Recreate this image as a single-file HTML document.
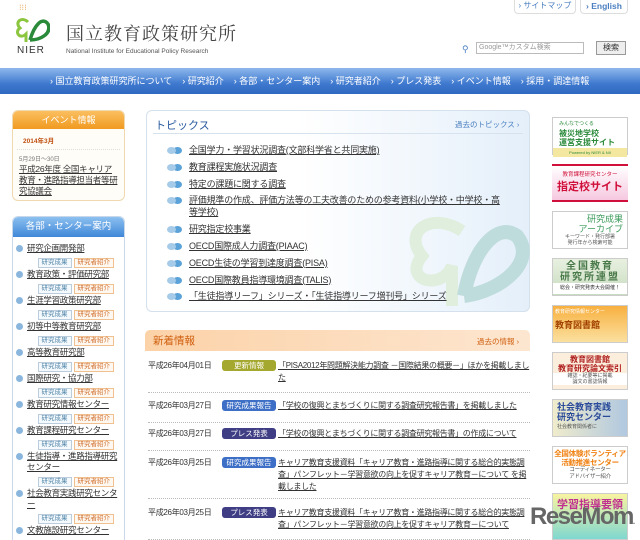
<!DOCTYPE html>
<html><head><meta charset="utf-8"><style>
*{margin:0;padding:0;box-sizing:border-box}
html,body{width:640px;height:540px;overflow:hidden}
body{background:#fff;font-family:"Liberation Sans","Noto Sans CJK JP",sans-serif;position:relative;color:#333}
.a{position:absolute}
u{text-decoration:underline}
.nav{left:0;top:68px;width:640px;height:26px;background:linear-gradient(#8fb8ec,#3f79cf 60%,#2f68c0);color:#fff;font-size:9px;line-height:26px;padding-left:50px;white-space:nowrap;overflow:hidden}
.nav span{margin-right:10px}
.box{border:1px solid #dfe6ef;border-radius:6px;background:#fff}
.tb{font-size:6.5px;padding:0 3px;border:1px solid #bcd;color:#58a;margin-right:2px;background:#f4f9fd;line-height:8px;display:inline-block}
.tb2{border-color:#f0c090;color:#d07030;background:#fff8f0}
.dep{font-size:8.5px;line-height:11px;padding-left:14px;position:relative;color:#333;letter-spacing:-0.3px}
.dep:before{content:"";position:absolute;left:3px;top:2px;width:7px;height:7px;border-radius:50%;background:#8ab6dd}
.tags{text-align:right;margin:1px 8px 4px 0;line-height:10px;height:10px}
.tp{font-size:9px;line-height:12px;padding-left:24px;position:relative;margin-bottom:4.8px;color:#333;letter-spacing:-0.2px}
.tp:before{content:"";position:absolute;left:2px;top:3px;width:9px;height:7px;border-radius:50%;background:#a6cbe8;box-shadow:6px 0 0 #5aa2d8}
.row{font-size:8px;left:148px;width:382px;border-bottom:1px dotted #bbb;position:absolute;letter-spacing:-0.3px}
.row .d{position:absolute;left:0;top:0}
.row .l{position:absolute;left:74px;top:0;width:54px;height:11px;border-radius:3px;color:#fff;font-size:7.5px;text-align:center;line-height:11px;letter-spacing:0}
.row .t{margin-left:130px;line-height:12px}
.bn{position:absolute;left:552px;width:76px;border:1px solid #ccc}
</style></head><body>
<div class="a" style="left:19px;top:3px;color:#e8a040;font-size:8px">⁝⁝⁝</div>
<svg class="a" style="left:14px;top:16px" width="36" height="28" viewBox="0 0 36 28"><path d="M14 6 C8 0 0 6 6 12 C0 16 6 24 12 18 L12 26" fill="none" stroke="#8cc63f" stroke-width="3"/><path d="M16 24 C20 10 28 0 34 8 C38 18 26 24 16 24" fill="none" stroke="#2a8a3a" stroke-width="3.5"/></svg>
<div class="a" style="left:17px;top:45px;font-size:10px;color:#333;letter-spacing:1px">NIER</div>
<div class="a" style="left:66px;top:20px;font-size:18px;color:#444;font-family:'Noto Serif CJK SC',serif;letter-spacing:1px">国立教育政策研究所</div>
<div class="a" style="left:66px;top:48px;font-size:6.5px;color:#555">National Institute for Educational Policy Research</div>
<div class="a" style="left:514px;top:0;width:62px;height:14px;border:1px solid #ddd;border-top:0;border-radius:0 0 4px 4px;font-size:8px;color:#4a7fc0;text-align:center;line-height:12px">› サイトマップ</div>
<div class="a" style="left:580px;top:0;width:48px;height:14px;border:1px solid #ddd;border-top:0;border-radius:0 0 4px 4px;font-size:8.5px;color:#4a7fc0;text-align:center;line-height:12px;font-weight:bold">› English</div>
<div class="a" style="left:462px;top:44px;font-size:9px;color:#4a7fc0">⚲</div>
<div class="a" style="left:476px;top:42px;width:108px;height:12px;border:1px solid #bbb;font-size:7px;color:#999;line-height:10px;padding-left:2px">Google™カスタム検索</div>
<div class="a" style="left:596px;top:41px;width:30px;height:14px;border:1px solid #999;background:#eee;font-size:8px;text-align:center;line-height:12px">検索</div>
<div class="a nav"><span>› 国立教育政策研究所について</span><span>› 研究紹介</span><span>› 各部・センター案内</span><span>› 研究者紹介</span><span>› プレス発表</span><span>› イベント情報</span><span>› 採用・調達情報</span></div>

<div class="a box" style="left:12px;top:110px;width:113px;height:91px;border-color:#f0d8b0;background:#fffdf8">
<div style="height:18px;background:linear-gradient(#fbbf60,#f09a20);border-radius:5px 5px 0 0;color:#fff;font-size:9px;text-align:center;line-height:18px">イベント情報</div>
<div style="font-size:6.5px;color:#c05010;font-weight:bold;padding:6px 6px 4px;border-bottom:1px dotted #ddd;margin:0 4px">2014年3月</div>
<div style="font-size:6px;color:#777;padding:4px 6px 1px">5月29日～30日</div>
<div style="font-size:8.5px;line-height:11px;padding:0 6px;letter-spacing:-0.3px"><u>平成26年度 全国キャリア教育・進路指導担当者等研究協議会</u></div>
</div>

<div class="a box" style="left:12px;top:216px;width:113px;height:324px;border-color:#c8d8ea;border-bottom:0;border-radius:6px 6px 0 0;overflow:hidden">
<div style="height:20px;background:linear-gradient(#8cc0f0,#3f87d8);border-radius:5px 5px 0 0;color:#fff;font-size:9.5px;text-align:center;line-height:20px">各部・センター案内</div>
<div style="padding-top:6px">
<div class="dep"><u>研究企画開発部</u></div><div class="tags"><span class="tb">研究成果</span><span class="tb tb2">研究者紹介</span></div>
<div class="dep"><u>教育政策・評価研究部</u></div><div class="tags"><span class="tb">研究成果</span><span class="tb tb2">研究者紹介</span></div>
<div class="dep"><u>生涯学習政策研究部</u></div><div class="tags"><span class="tb">研究成果</span><span class="tb tb2">研究者紹介</span></div>
<div class="dep"><u>初等中等教育研究部</u></div><div class="tags"><span class="tb">研究成果</span><span class="tb tb2">研究者紹介</span></div>
<div class="dep"><u>高等教育研究部</u></div><div class="tags"><span class="tb">研究成果</span><span class="tb tb2">研究者紹介</span></div>
<div class="dep"><u>国際研究・協力部</u></div><div class="tags"><span class="tb">研究成果</span><span class="tb tb2">研究者紹介</span></div>
<div class="dep"><u>教育研究情報センター</u></div><div class="tags"><span class="tb">研究成果</span><span class="tb tb2">研究者紹介</span></div>
<div class="dep"><u>教育課程研究センター</u></div><div class="tags"><span class="tb">研究成果</span><span class="tb tb2">研究者紹介</span></div>
<div class="dep"><u>生徒指導・進路指導研究センター</u></div><div class="tags"><span class="tb">研究成果</span><span class="tb tb2">研究者紹介</span></div>
<div class="dep"><u>社会教育実践研究センター</u></div><div class="tags"><span class="tb">研究成果</span><span class="tb tb2">研究者紹介</span></div>
<div class="dep"><u>文教施設研究センター</u></div><div class="tags"><span class="tb">研究成果</span><span class="tb tb2">研究者紹介</span></div>
</div></div>

<div class="a box" style="left:146px;top:110px;width:384px;height:202px;background:linear-gradient(90deg,#fff 40%,#e4effa);border-color:#d4e0ec">
<svg class="a" style="left:255px;top:100px" width="130" height="100" viewBox="0 0 130 100"><path d="M60 20 C30 0 0 20 20 45 C0 70 40 80 50 55 L50 95" fill="none" stroke="#dfeedd" stroke-width="12"/><path d="M62 85 C70 40 95 10 115 25 C135 50 100 80 62 85" fill="none" stroke="#bfdcdc" stroke-width="14"/></svg>
<div class="a" style="left:8px;top:6px;font-size:11px;color:#2a5aa0">トピックス</div>
<div class="a" style="left:308px;top:8px;font-size:7.5px;color:#4a7fc0">過去のトピックス ›</div>
<div class="a" style="left:6px;top:22px;width:370px;border-top:1px solid #d6e2ee"></div>
<div class="a" style="left:18px;top:33px;width:340px">
<div class="tp"><u>全国学力・学習状況調査(文部科学省と共同実施)</u></div>
<div class="tp"><u>教育課程実施状況調査</u></div>
<div class="tp"><u>特定の課題に関する調査</u></div>
<div class="tp"><u>評価規準の作成、評価方法等の工夫改善のための参考資料(小学校・中学校・高等学校)</u></div>
<div class="tp"><u>研究指定校事業</u></div>
<div class="tp"><u>OECD国際成人力調査(PIAAC)</u></div>
<div class="tp"><u>OECD生徒の学習到達度調査(PISA)</u></div>
<div class="tp"><u>OECD国際教員指導環境調査(TALIS)</u></div>
<div class="tp"><u>「生徒指導リーフ」シリーズ・「生徒指導リーフ増刊号」シリーズ</u></div>
</div></div>

<div class="a" style="left:145px;top:330px;width:385px;height:21px;background:linear-gradient(90deg,#fcd2a8,#fde6d0);border-radius:5px 5px 0 0"></div>
<div class="a" style="left:153px;top:333px;font-size:10.5px;color:#d06010">新着情報</div>
<div class="a" style="left:477px;top:336px;font-size:7.5px;color:#d06010">過去の情報 ›</div>

<div class="row" style="top:360px;height:33px"><span class="d">平成26年04月01日</span><span class="l" style="background:#a5a82e">更新情報</span><div class="t"><u>「PISA2012年問題解決能力調査 －国際結果の概要－」ほかを掲載しました</u></div></div>
<div class="row" style="top:400px;height:23px"><span class="d">平成26年03月27日</span><span class="l" style="background:#3d6fc6">研究成果報告</span><div class="t"><u>「学校の復興とまちづくりに関する調査研究報告書」を掲載しました</u></div></div>
<div class="row" style="top:428px;height:23px"><span class="d">平成26年03月27日</span><span class="l" style="background:#3f3e84">プレス発表</span><div class="t"><u>「学校の復興とまちづくりに関する調査研究報告書」の作成について</u></div></div>
<div class="row" style="top:457px;height:42px"><span class="d">平成26年03月25日</span><span class="l" style="background:#3d6fc6">研究成果報告</span><div class="t"><u>キャリア教育支援資料「キャリア教育・進路指導に関する総合的実態調査」パンフレット－学習意欲の向上を促すキャリア教育－について を掲載しました</u></div></div>
<div class="row" style="top:507px;height:33px"><span class="d">平成26年03月25日</span><span class="l" style="background:#3f3e84">プレス発表</span><div class="t"><u>キャリア教育支援資料「キャリア教育・進路指導に関する総合的実態調査」パンフレット－学習意欲の向上を促すキャリア教育－について</u></div></div>

<div class="bn" style="top:117px;height:38px;background:#fff;font-size:8px;color:#2a8a3a;line-height:9px;padding:2px 6px">
<div style="font-size:5px">みんなでつくる</div><b>被災地学校<br>運営支援サイト</b><div style="background:#f4e8a0;font-size:4px;margin:1px -6px 0;text-align:center">Powered by NIER &amp; NII</div></div>
<div class="bn" style="top:164px;height:38px;background:linear-gradient(#fff,#f6c8e0);border:0;border-top:2px solid #d0103a;border-bottom:2px solid #d0103a;text-align:center;color:#d0103a">
<div style="font-size:5.5px;margin-top:4px">教育課程研究センター</div><div style="font-size:11px;font-weight:bold">指定校サイト</div></div>
<div class="bn" style="top:211px;height:38px;background:#fff;font-size:9px;color:#3a9a5a;text-align:right;padding:2px 4px;line-height:10px">研究成果<br>アーカイブ<div style="font-size:5px;color:#555;text-align:center;line-height:6px">キーワード・発行部署<br>発行年から検索可能</div></div>
<div class="bn" style="top:258px;height:38px;background:linear-gradient(#e8f0e0,#c8dcc0);text-align:center;color:#4a7a4a;font-size:10px;line-height:11px;padding-top:2px;letter-spacing:2px"><b>全国教育<br>研究所連盟</b><div style="font-size:5px;color:#333;background:#fff;letter-spacing:0">総会・研究発表大会開催！</div></div>
<div class="bn" style="top:305px;height:38px;background:linear-gradient(#f8b040,#fbe0a0);color:#fff;font-size:5px;padding:2px"><div>教育研究情報センター</div><div style="font-size:9px;color:#a04000;font-weight:bold;margin-top:3px">教育図書館</div></div>
<div class="bn" style="top:352px;height:38px;background:#fbeedd;color:#b02020;font-size:8px;text-align:center;line-height:9px;padding-top:2px"><b>教育図書館<br>教育研究論文索引</b><div style="font-size:5px;color:#555;background:#fff;line-height:6px">雑誌・紀要等に掲載<br>論文の書誌情報</div></div>
<div class="bn" style="top:399px;height:38px;background:linear-gradient(90deg,#f0eccc,#b0c8e0);color:#2a4a9a;font-size:9px;line-height:10px;padding:2px 4px"><b>社会教育実践<br>研究センター</b><div style="font-size:5px;color:#555">社会教育関係者に</div></div>
<div class="bn" style="top:446px;height:38px;background:#fff;color:#f08010;font-size:7.5px;text-align:center;line-height:9px;padding-top:2px;letter-spacing:-0.3px"><b>全国体験ボランティア<br>活動推進センター</b><div style="font-size:5.5px;color:#555;line-height:7px">コーディネーター<br>アドバイザー紹介</div></div>
<div class="bn" style="top:493px;height:47px;background:linear-gradient(#f8f4a0,#80d8d0);color:#c03090;font-size:11px;font-weight:bold;text-align:center;padding-top:2px">学習指導要領</div>
<div class="a" style="left:530px;top:503px;font-size:24px;font-weight:bold;color:#666;letter-spacing:-1.5px;font-family:'Liberation Sans',sans-serif">ReseMom<span style="font-size:8px">.</span></div>
</body></html>
